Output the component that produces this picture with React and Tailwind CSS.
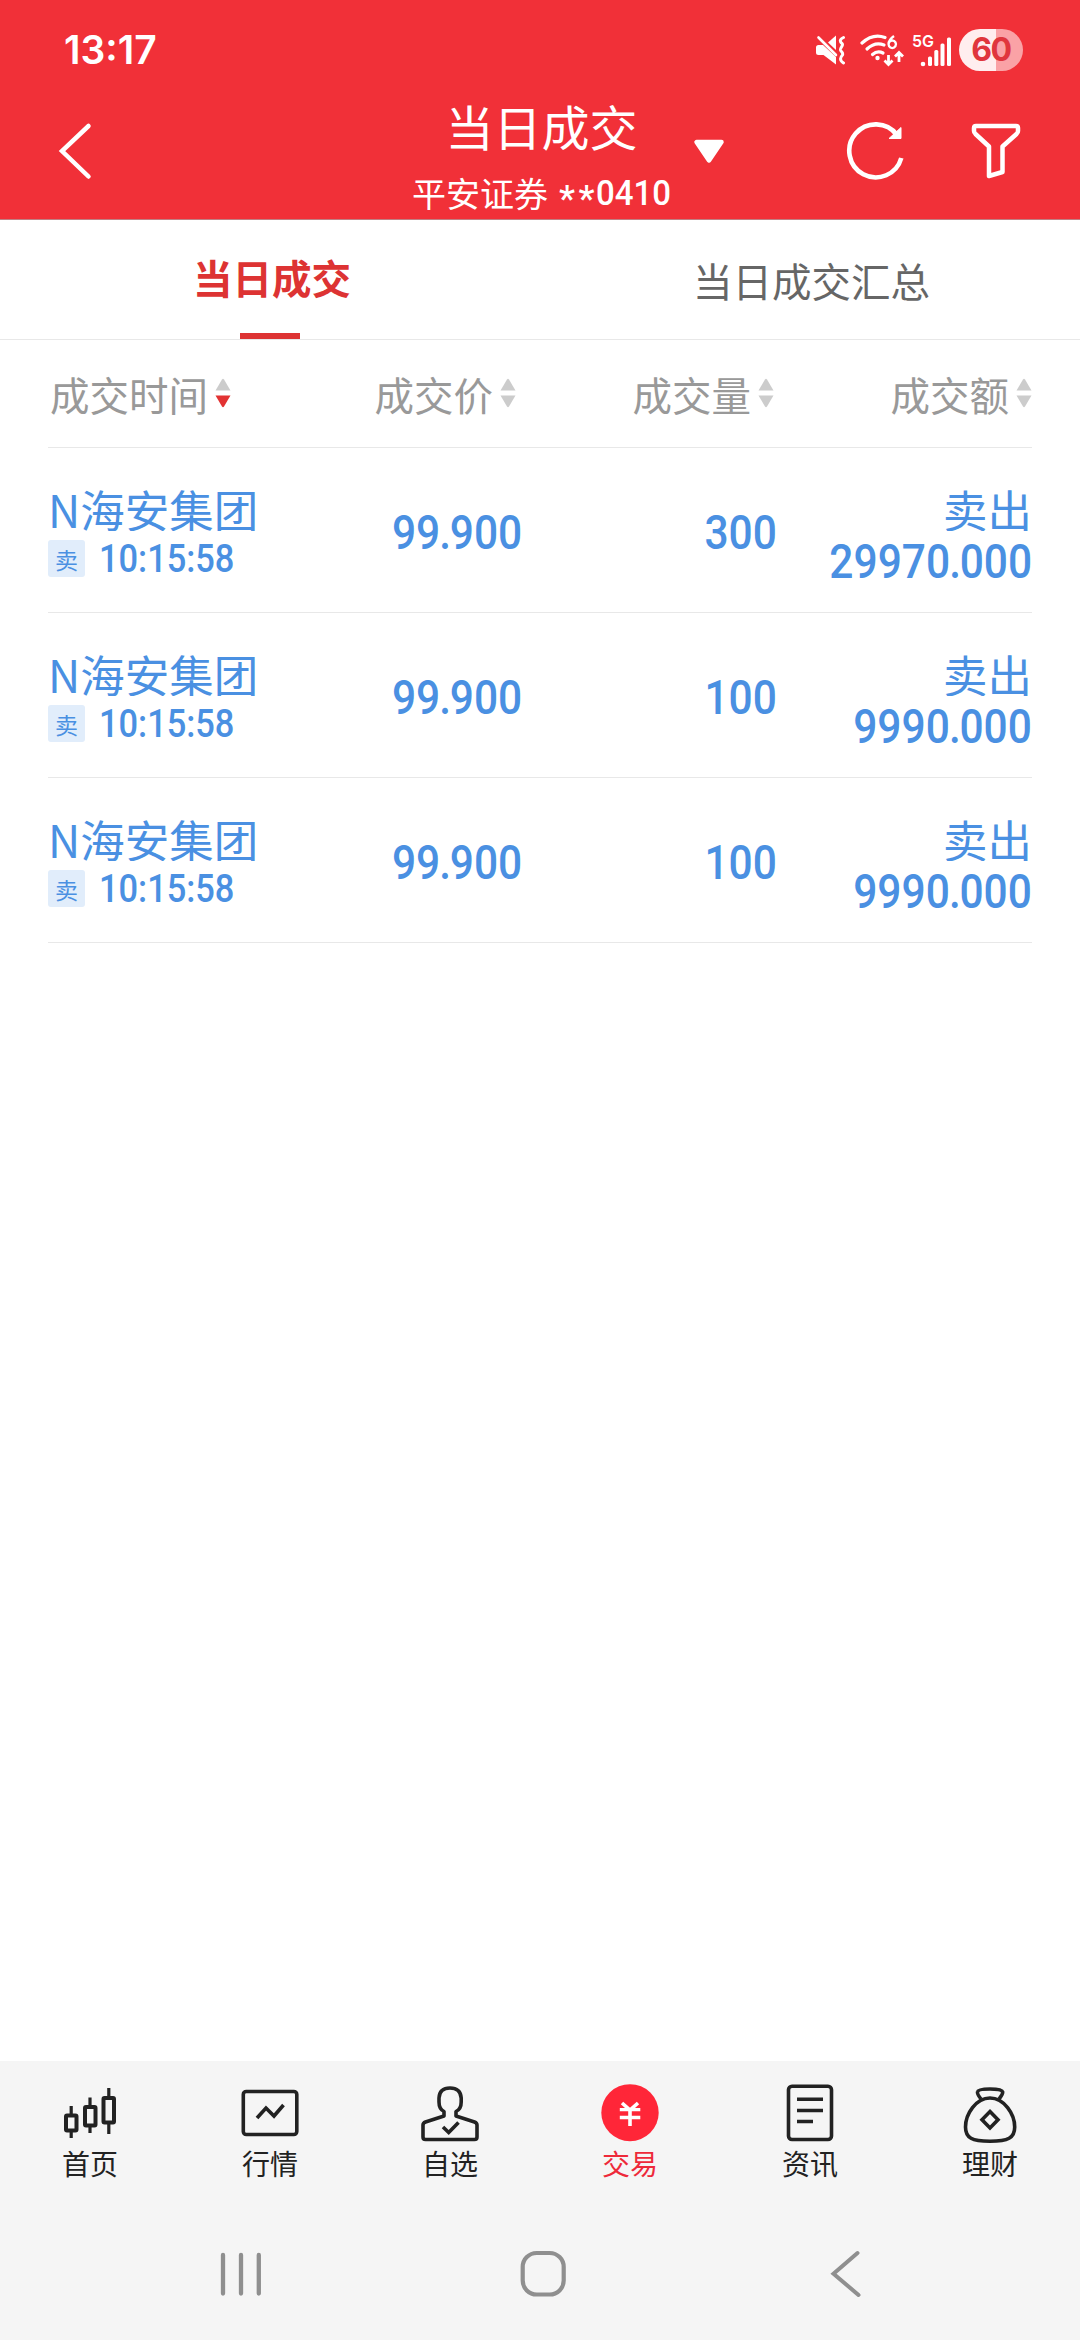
import React from 'react';

const CJK = 'font-["Noto_Sans_CJK_SC",sans-serif]';
const DIN = 'font-[Roboto,sans-serif] font-medium';

function StatusBar() {
  return (
    <div className="flex h-[100px] items-center justify-between pl-[64px] pr-[57px]">
      <span className="font-[Inter,sans-serif] text-[39px] leading-[40px] font-semibold text-white">13:17</span>
      <div className="flex items-center">
        <svg width="30" height="32" viewBox="815 35 30 32" fill="none" stroke="#fff">
          <path d="M816 48.5Q816 46 818.500 46H823L836 58V65.500L823.500 56H818.500Q816 56 816 53.500Z" fill="#fff" stroke="none" />
          <path d="M828 43.500L836 36.500V51Z" fill="#fff" stroke="none" />
          <path d="M818.500 38.500L836 56" strokeWidth="2.600" strokeLinecap="round" />
          <path d="M843.500 38.500C839 40.500 840 43 842 44.500C844 46 840 48.500 840.500 51C841 53 843.500 53.500 842.500 56C840 58.500 839.500 61.500 843.500 64" strokeWidth="3" strokeLinecap="round" />
        </svg>
        <svg className="ml-[14px]" width="46" height="36" viewBox="859 33 46 36" fill="none" stroke="#fff">
          <g strokeWidth="3.200" strokeLinecap="round">
            <path d="M862 44Q873 34 885 38.500" />
            <path d="M867 50Q875 42.500 884 46" />
            <path d="M872.500 55.500Q877.500 51 883 54" />
          </g>
          <circle cx="877.500" cy="59" r="2.200" fill="#fff" stroke="none" />
          <path d="M894 37Q888.500 41 888.600 45M892.300 41.500A3.700 3.800 0 1 1 892.200 41.500Z" strokeWidth="2.400" />
          <path d="M888.500 56V65M884.500 61.500L888.500 65.500L892.500 61.500M899 63V54M895 57.500L899 53.500L903 57.500" strokeWidth="2.800" />
        </svg>
        <svg className="ml-[7px]" width="40" height="36" viewBox="912 33 40 36">
          <text x="912" y="48" fill="#fff" fontFamily="Inter, sans-serif" fontWeight="600" fontSize="16.500" textLength="22" lengthAdjust="spacingAndGlyphs">5G</text>
          <g fill="#fff">
            <circle cx="923" cy="65" r="2.300" />
            <rect x="928" y="57.500" width="4" height="9.500" rx="1.500" />
            <rect x="934.300" y="51" width="4" height="16" rx="1.500" />
            <rect x="940.500" y="44.500" width="4" height="22.500" rx="1.500" />
            <rect x="947" y="38.500" width="4" height="28.500" rx="1.500" />
          </g>
        </svg>
        <div className="ml-[7px] flex h-[42px] w-[64px] items-center justify-center rounded-full bg-[linear-gradient(to_right,#ffeeef_37px,#faa2a6_37px)]">
          <span className="font-[Inter,sans-serif] text-[32px] leading-[42px] font-bold tracking-[-1.500px] text-[#e0363d]">60</span>
        </div>
      </div>
    </div>
  );
}

function TitleBar() {
  return (
    <div className="flex h-[119px]">
      <svg className="mt-[22px] ml-[58px]" width="34" height="58" viewBox="58 122 34 58" fill="none" stroke="#fff" strokeWidth="4.500">
        <path d="M88.500 126L62 151L88.500 176.500" strokeLinecap="round" />
      </svg>
      <div className="ml-[320px] flex w-[262px] flex-col items-center text-white">
        <div className="-mt-[3px] -ml-[3px] h-[56px] text-[48px] leading-[56px] whitespace-nowrap">当日成交</div>
        <div className="mt-[18px] flex h-[44px] w-[262px] items-center whitespace-nowrap">
          <span className="text-[34px] leading-[44px]">平安证券</span>
          <span className={DIN + ' ml-[11px] mt-[12px] inline-block w-[37px] text-[36px] leading-[44px] tracking-[3.500px]'}>**</span>
          <span className={DIN + ' inline-block origin-left scale-x-[0.93] text-[35.500px] leading-[44px]'}>0410</span>
        </div>
      </div>
      <svg className="mt-[38px] ml-[19px]" width="32" height="28" viewBox="693 138 32 28">
        <path d="M696.500 142H721.500L709 160.500Z" fill="#fff" stroke="#fff" strokeWidth="4.500" strokeLinejoin="round" />
      </svg>
      <svg className="mt-[20px] ml-[120px]" width="62" height="62" viewBox="845 120 62 62" fill="none" stroke="#fff">
        <path d="M901.300 158A26.500 26.500 0 1 1 897 135" strokeWidth="4.600" />
        <path d="M901 127.500V138.500H889Z" fill="#fff" strokeWidth="1" />
      </svg>
      <svg className="mt-[20px] ml-[63px]" width="52" height="62" viewBox="970 120 52 62" fill="none" stroke="#fff" strokeWidth="4.500" strokeLinejoin="round">
        <path d="M976 126H1016Q1018 126 1018 128V131Q1018 132.500 1016.500 134L1002.500 146.500V172L989 176V146.500L975.500 134Q974 132.500 974 131V128Q974 126 976 126Z" />
      </svg>
    </div>
  );
}

function Sort({ down }) {
  return (
    <svg className="-mt-[2px] ml-[7px]" width="16" height="30" viewBox="0 0 16 30">
      <path d="M0.500 12.500L7 1.500Q8 0 9 1.500L15.500 12.500Z" fill="#ccc" />
      <path d="M0.500 17.500H15.500L9 28.500Q8 30 7 28.500Z" fill={down ? '#e23232' : '#ccc'} />
    </svg>
  );
}

function Head({ label, down, className }) {
  return (
    <div className={'flex items-center justify-end ' + className}>
      <span className="mt-[1px] text-[39.500px] leading-[48px] whitespace-nowrap">{label}</span>
      <Sort down={down} />
    </div>
  );
}

/* Condensed figure text; the decimal point sits tighter than the digits. */
function Num({ value }) {
  const [whole, frac] = value.split('.');
  return (
    <span className={DIN + ' inline-block origin-right scale-x-[0.885] text-[48px] leading-[48px] whitespace-nowrap'}>
      {whole}
      {frac && <span className="-ml-[1px] tracking-[-1.500px]">.</span>}
      {frac}
    </span>
  );
}

function Row({ price, qty, amount }) {
  return (
    <div className="flex h-[165px] border-b border-[#e8e8e8] text-[#4a90e2]">
      <div className="w-[222px] shrink-0">
        <div className="mt-[38px] h-[45px] overflow-hidden text-[44.500px] leading-[45px] whitespace-nowrap">N海安集团</div>
        <div className="mt-[9px] flex h-[37px] items-center">
          <span className="flex h-[37px] w-[37px] items-center justify-center rounded-[3px] bg-[#e1edfb] text-[23px] leading-[34px]">卖</span>
          <span className={DIN + ' mt-[1px] ml-[14px] inline-block origin-left scale-x-[0.905] text-[38px] leading-[38px]'}>10:15:58</span>
        </div>
      </div>
      <div className="mt-[61px] w-[252px] text-right"><Num value={price} /></div>
      <div className="mt-[61px] w-[255px] text-right"><Num value={qty} /></div>
      <div className="flex w-[255px] flex-col items-end">
        <div className="mt-[38px] h-[45px] overflow-hidden text-[44.500px] leading-[45px]">卖出</div>
        <div className="mt-[7px] h-[48px]"><Num value={amount} /></div>
      </div>
    </div>
  );
}

const icons = {
  home: (
    <svg width="60" height="64" viewBox="60 2084 60 64" fill="none" stroke="#222" strokeWidth="4">
      <path d="M71.200 2106V2115M71.200 2131V2138M90 2097.500V2106M90 2126V2133M108.800 2088V2097M108.800 2123V2134" strokeWidth="3.200" />
      <rect x="66" y="2115.500" width="10.500" height="15" rx="1" />
      <rect x="85" y="2107" width="10.500" height="18.500" rx="1" />
      <rect x="103.500" y="2098" width="10.500" height="24.500" rx="1" />
    </svg>
  ),
  market: (
    <svg width="60" height="64" viewBox="240 2084 60 64" fill="none" stroke="#222" strokeWidth="3.600">
      <rect x="243.300" y="2091.500" width="53.500" height="43" rx="3" />
      <path d="M257 2118L266 2108L274 2116L283.500 2105" />
    </svg>
  ),
  watch: (
    <svg width="60" height="64" viewBox="420 2084 60 64" fill="none" stroke="#222" strokeWidth="3.600" strokeLinejoin="round">
      <path d="M444 2111.500V2116L425.500 2122Q423 2123 423 2125V2137Q423 2139.500 425.500 2139.500H474.500Q477 2139.500 477 2137V2125Q477 2123 474.500 2122L456 2116V2111.500Q461.200 2109 461.200 2102V2098Q460.500 2088 450 2088Q439.500 2088 439 2098V2102Q439 2109 444 2111.500Z" />
      <path d="M443 2127L448.700 2132.500L458.500 2122.500" strokeLinejoin="miter" />
    </svg>
  ),
  trade: (
    <svg width="60" height="64" viewBox="600 2084 60 64" fill="none" stroke="#fff">
      <ellipse cx="630" cy="2112.700" rx="28.700" ry="28.500" fill="#ff2638" stroke="none" />
      <path d="M622 2103L630 2110L638 2103M630 2110V2126" strokeWidth="3.600" />
      <path d="M619.800 2109.700H640.300M619.800 2117.500H640.300" strokeWidth="3.300" />
    </svg>
  ),
  news: (
    <svg width="60" height="64" viewBox="780 2084 60 64" fill="none" stroke="#222" strokeWidth="3.600">
      <rect x="788.500" y="2086.200" width="43" height="53.300" rx="3.500" />
      <path d="M797 2099.300H823M797 2110.500H823M797 2121.500H813" />
    </svg>
  ),
  wealth: (
    <svg width="60" height="64" viewBox="960 2084 60 64" fill="none" stroke="#222" strokeWidth="3.600" strokeLinejoin="round">
      <path d="M981 2099Q977 2094 977.500 2092Q978 2089 990 2089Q1002 2089 1002.700 2092Q1003 2094 999 2099" />
      <path d="M990 2098C976 2098 965.500 2114 965.500 2127C965.500 2138 972 2141.300 990 2141.300C1008 2141.300 1014.700 2138 1014.700 2127C1014.700 2114 1004 2098 990 2098Z" />
      <path d="M990 2111.500L998 2119.700L990 2128L982 2119.700Z" strokeLinejoin="miter" />
    </svg>
  ),
};

const tabs = [
  ['home', '首页'],
  ['market', '行情'],
  ['watch', '自选'],
  ['trade', '交易'],
  ['news', '资讯'],
  ['wealth', '理财'],
];

const rows = [
  { price: '99.900', qty: '300', amount: '29970.000' },
  { price: '99.900', qty: '100', amount: '9990.000' },
  { price: '99.900', qty: '100', amount: '9990.000' },
];

export default function App() {
  return (
    <div className={CJK + ' flex h-[2340px] w-[1080px] flex-col overflow-hidden bg-white'}>
      <header className="h-[219px] shrink-0 bg-[#f13038]">
        <StatusBar />
        <TitleBar />
      </header>
      <div className="grid h-[121px] shrink-0 grid-cols-2 border-t border-b border-t-[#c08083] border-b-[#e8e8e8]">
        <div className="flex flex-col items-center justify-between">
          <span className="mt-[31px] ml-[4px] text-[39.500px] leading-[52px] font-bold text-[#dd3333]">当日成交</span>
          <span className="h-[6px] w-[60px] bg-[#dd3333]" />
        </div>
        <div className="flex justify-center">
          <span className="mt-[34px] ml-[3px] text-[39.500px] leading-[52px] text-[#666]">当日成交汇总</span>
        </div>
      </div>
      <main className="mx-[48px] grow">
        <div className="flex h-[108px] items-center border-b border-[#e8e8e8] text-[#999]">
          <Head label="成交时间" down className="w-[183px]" />
          <Head label="成交价" className="w-[285px]" />
          <Head label="成交量" className="w-[258px]" />
          <Head label="成交额" className="w-[258px]" />
        </div>
        {rows.map((r, i) => <Row key={i} {...r} />)}
      </main>
      <footer className="h-[279px] shrink-0 bg-[#f5f5f5]">
        <nav className="grid h-[160px] grid-cols-6">
          {tabs.map(([id, label]) => (
            <div key={id} className={'flex flex-col items-center pt-[23px] ' + (id === 'trade' ? 'text-[#ee2a3a]' : 'text-[#222]')}>
              {icons[id]}
              <span className="-mt-[3px] text-[28px] leading-[36px]">{label}</span>
            </div>
          ))}
        </nav>
        <div className="flex pt-[28px] pl-[220px]">
          <svg width="42" height="50" viewBox="220 2249 42 50" stroke="#8f8f8f" strokeWidth="4.300" strokeLinecap="round">
            <path d="M223 2255V2293.500M241 2255V2293.500M258.800 2255V2293.500" />
          </svg>
          <svg className="ml-[256px]" width="50" height="50" viewBox="518 2249 50 50" fill="none" stroke="#8f8f8f" strokeWidth="4.200">
            <rect x="522.700" y="2253" width="41" height="41.500" rx="14" />
          </svg>
          <svg className="ml-[262px]" width="34" height="50" viewBox="830 2249 34 50" fill="none" stroke="#8f8f8f" strokeWidth="4" strokeLinecap="round">
            <path d="M857.500 2253L833.500 2273.700L858.500 2295" />
          </svg>
        </div>
      </footer>
    </div>
  );
}
